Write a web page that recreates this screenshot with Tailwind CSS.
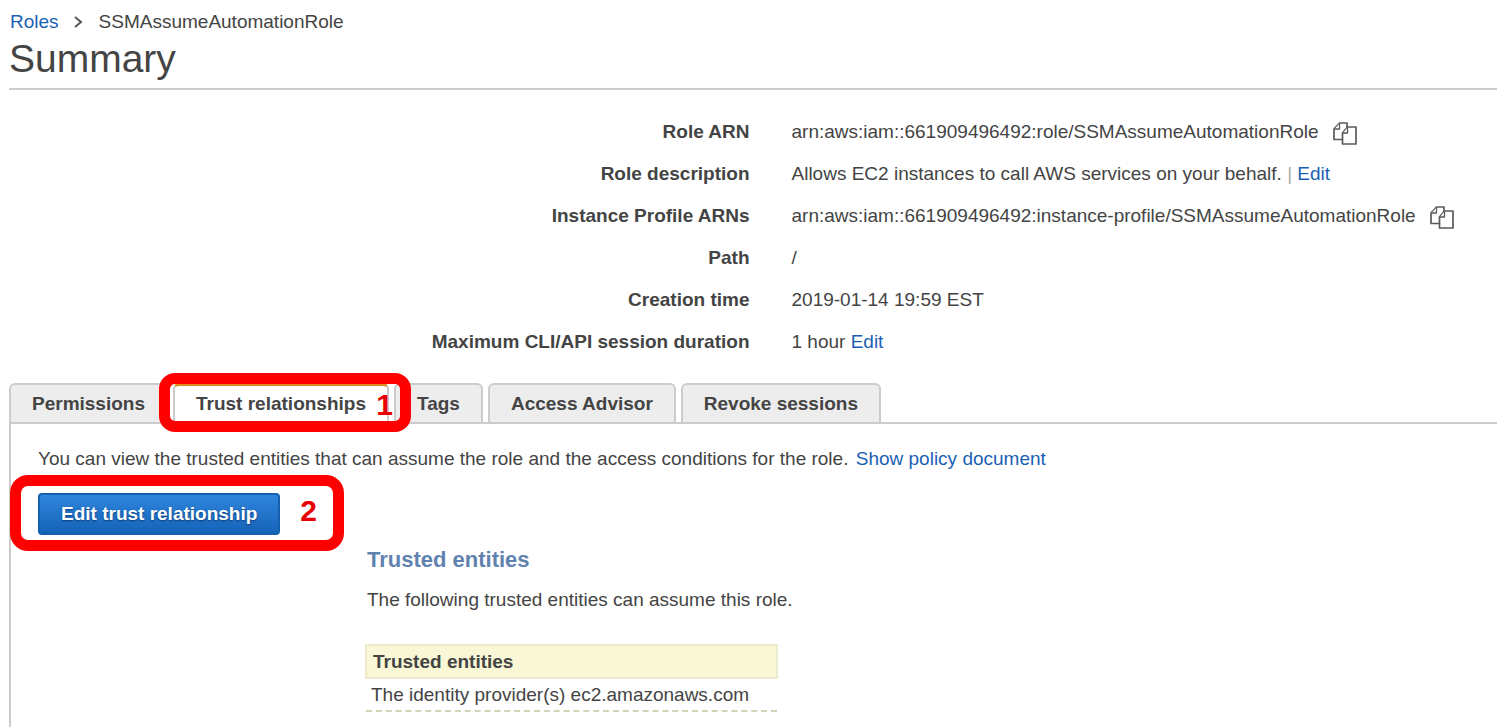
<!DOCTYPE html>
<html lang="en">
<head>
    <meta charset="UTF-8">
    <meta name="viewport" content="width=device-width, initial-scale=1.0">
    <title>SSMAssumeAutomationRole - Summary</title>
    <script src="https://cdn.jsdelivr.net/npm/@tailwindcss/browser@4"></script>
</head>
<body class="bg-white min-h-screen flex flex-col pl-[9px] overflow-x-hidden font-['Liberation_Sans',Arial,sans-serif] text-[19px] leading-[26px] text-[#444]">
    <!-- Breadcrumb and title -->
    <header class="border-b-2 border-[#ccc] pt-[9px] pb-[6px]">
        <nav aria-label="Breadcrumb" class="flex items-center pl-px">
            <a href="#" class="text-[#1b5fb4]">Roles</a>
            <svg class="w-[10px] h-[14px] mx-[15px]" viewBox="0 0 10 14" fill="none" stroke="#555" stroke-width="2" aria-hidden="true"><path d="M1 2l6 5-6 5"/></svg>
            <span>SSMAssumeAutomationRole</span>
        </nav>
        <h1 class="text-[39px] leading-[47px]">Summary</h1>
    </header>

    <!-- Role details -->
    <dl class="grid grid-cols-2 gap-x-[42px] gap-y-4 pt-[29px] pb-[28px] -ml-[8px] -mr-[43px]">
        <dt class="font-bold text-right">Role ARN</dt>
        <dd class="flex items-center whitespace-nowrap">arn:aws:iam::661909496492:role/SSMAssumeAutomationRole
            <button type="button" aria-label="Copy role ARN" class="ml-[14px] pt-[2px]">
                <svg class="w-6 h-[23px]" viewBox="0 0 24 23" fill="#fff" stroke="#5a5a5a" stroke-width="1.7" stroke-linejoin="round"><path d="M6.500 1H14V17.500H1V7z"/><path d="M6.500 1.500V7H1.500" stroke-width="1.300"/><path d="M14.500 5H23V22H9.500V11z"/><path d="M14.500 5.500V11H10" stroke-width="1.300"/></svg>
            </button>
        </dd>
        <dt class="font-bold text-right">Role description</dt>
        <dd class="whitespace-nowrap">Allows EC2 instances to call AWS services on your behalf. <span class="text-[#aaa]">|</span> <a href="#" class="text-[#1b5fb4]">Edit</a></dd>
        <dt class="font-bold text-right">Instance Profile ARNs</dt>
        <dd class="flex items-center whitespace-nowrap">arn:aws:iam::661909496492:instance-profile/SSMAssumeAutomationRole
            <button type="button" aria-label="Copy instance profile ARN" class="ml-[14px] pt-[2px]">
                <svg class="w-6 h-[23px]" viewBox="0 0 24 23" fill="#fff" stroke="#5a5a5a" stroke-width="1.7" stroke-linejoin="round"><path d="M6.500 1H14V17.500H1V7z"/><path d="M6.500 1.500V7H1.500" stroke-width="1.300"/><path d="M14.500 5H23V22H9.500V11z"/><path d="M14.500 5.500V11H10" stroke-width="1.300"/></svg>
            </button>
        </dd>
        <dt class="font-bold text-right">Path</dt>
        <dd>/</dd>
        <dt class="font-bold text-right">Creation time</dt>
        <dd>2019-01-14 19:59 EST</dd>
        <dt class="font-bold text-right">Maximum CLI/API session duration</dt>
        <dd>1 hour <a href="#" class="text-[#1b5fb4]">Edit</a></dd>
    </dl>

    <!-- Tabs -->
    <div role="tablist" class="flex gap-[5px] border-b-2 border-[#ccc]">
        <button role="tab" type="button" class="h-[39px] px-[21px] font-bold bg-[#ededed] border-2 border-b-0 border-[#ccc] rounded-t-md">Permissions</button>
        <div class="relative">
            <button role="tab" type="button" aria-selected="true" class="h-[41px] -mb-[2px] px-[21px] pb-[3px] font-bold bg-white border-2 border-t-[3px] border-b-0 border-[#ccc] border-t-[#e08a1e] rounded-t-md">Trust relationships</button>
            <div class="absolute z-10 -left-[14px] -right-[22px] -top-[10px] h-[59px] border-[11px] border-[#fe0000] rounded-2xl pointer-events-none"></div>
            <span class="absolute z-10 -right-[4px] top-[5px] text-[30px] leading-[34px] font-bold text-[#e90000]">1</span>
        </div>
        <button role="tab" type="button" class="h-[39px] px-[21px] font-bold bg-[#ededed] border-2 border-b-0 border-[#ccc] rounded-t-md">Tags</button>
        <button role="tab" type="button" class="h-[39px] px-[21px] font-bold bg-[#ededed] border-2 border-b-0 border-[#ccc] rounded-t-md">Access Advisor</button>
        <button role="tab" type="button" class="h-[39px] px-[21px] font-bold bg-[#ededed] border-2 border-b-0 border-[#ccc] rounded-t-md">Revoke sessions</button>
    </div>

    <!-- Trust relationships panel -->
    <main role="tabpanel" class="grow border-l-2 border-[#ccc] pt-[22px] pl-[27px]">
        <p>You can view the trusted entities that can assume the role and the access conditions for the role. <a href="#" class="ml-[2px] text-[#1b5fb4]">Show policy document</a></p>
        <div class="relative flex w-fit gap-5 mt-[21px]">
            <div class="absolute -left-[28px] -right-[27px] -top-[18px] -bottom-[16px] border-[11px] border-[#fe0000] rounded-[18px] pointer-events-none"></div>
            <button type="button" class="h-[42px] px-[21px] font-bold text-white text-shadow-[0_1px_2px_#0a3a75] bg-linear-to-b from-[#2f86dd] to-[#1463b8] border-2 border-[#1560ae] rounded">Edit trust relationship</button>
            <span class="text-[30px] leading-[36px] font-bold text-[#e90000]">2</span>
        </div>
        <section class="ml-[327px] mt-3 w-[413px]">
            <h2 class="pl-[2px] text-[22px] leading-[26px] font-bold text-[#5f82ae]">Trusted entities</h2>
            <p class="pl-[2px] mt-[14px] whitespace-nowrap">The following trusted entities can assume this role.</p>
            <table class="w-full mt-[31px] border-collapse">
                <thead>
                    <tr><th class="h-[33px] px-[6px] text-left font-bold bg-[#faf7d6] border-2 border-[#ecebcb]">Trusted entities</th></tr>
                </thead>
                <tbody>
                    <tr><td class="h-[33px] px-[5px] border-b-2 border-dashed border-[#d3d3b8]">The identity provider(s) ec2.amazonaws.com</td></tr>
                </tbody>
            </table>
        </section>
    </main>
</body>
</html>
